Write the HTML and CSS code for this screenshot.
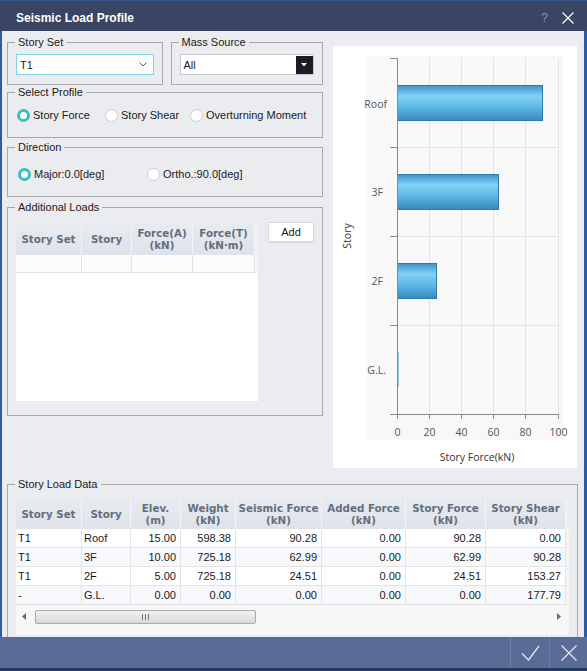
FILE: index.html
```html
<!DOCTYPE html>
<html>
<head>
<meta charset="utf-8">
<title>Seismic Load Profile</title>
<link rel="stylesheet" href="styles.css">
</head>
<body>
<div class="window">
  <div class="titlebar">
    <span class="title">Seismic Load Profile</span>
    <span class="help">?</span>
    <svg class="tclose" width="12" height="12" viewBox="0 0 12 12"><path d="M0.5 0.5 L11.5 11.5 M11.5 0.5 L0.5 11.5" stroke="#ffffff" stroke-width="1.2" fill="none"/></svg>
  </div>
  <div class="client">
    <div class="upper">
      <div class="leftcol">
        <div class="row1">
          <fieldset class="gb gb-storyset">
            <legend>Story Set</legend>
            <div class="gb-body pad-combo">
              <div class="combo combo-cyan">
                <span>T1</span>
                <svg width="8" height="5" viewBox="0 0 8 5"><polyline points="0.5,0.5 4,4 7.5,0.5" fill="none" stroke="#555" stroke-width="1"/></svg>
              </div>
            </div>
          </fieldset>
          <fieldset class="gb gb-mass">
            <legend>Mass Source</legend>
            <div class="gb-body pad-combo">
              <div class="combo combo-gray">
                <span>All</span>
                <span class="dropbtn"><svg width="6" height="4" viewBox="0 0 6 4"><polygon points="0,0 6,0 3,3.5" fill="#ffffff"/></svg></span>
              </div>
            </div>
          </fieldset>
        </div>
        <fieldset class="gb gb-profile">
          <legend>Select Profile</legend>
          <div class="gb-body radios profile">
            <label class="radio on w88"><i></i>Story Force</label>
            <label class="radio w85"><i></i>Story Shear</label>
            <label class="radio"><i></i>Overturning Moment</label>
          </div>
        </fieldset>
        <fieldset class="gb gb-dir">
          <legend>Direction</legend>
          <div class="gb-body radios dir">
            <label class="radio on w129"><i></i>Major:0.0[deg]</label>
            <label class="radio"><i></i>Ortho.:90.0[deg]</label>
          </div>
        </fieldset>
        <fieldset class="gb gb-add">
          <legend>Additional Loads</legend>
          <div class="gb-body addbody">
            <div class="grid addgrid">
              <div class="ghead addcols">
                <div class="hc">Story Set</div>
                <div class="hc">Story</div>
                <div class="hc">Force(A)<br>(kN)</div>
                <div class="hc">Force(T)<br>(kN·m)</div>
                <div class="hfill"></div>
              </div>
              <div class="grow addcols empty">
                <div class="c"></div><div class="c"></div><div class="c"></div><div class="c"></div><div class="cfill"></div>
              </div>
            </div>
            <button class="btn">Add</button>
          </div>
        </fieldset>
      </div>
      <div class="chart">
        <svg width="244" height="422" viewBox="0 0 244 422">
          <defs>
            <linearGradient id="bar" x1="0" y1="0" x2="0" y2="1">
              <stop offset="0" stop-color="#3e95c8"/>
              <stop offset="0.3" stop-color="#82d1f7"/>
              <stop offset="0.65" stop-color="#5bb5e3"/>
              <stop offset="1" stop-color="#3787bb"/>
            </linearGradient>
          </defs>
          <rect x="33" y="10" width="197" height="384" fill="#f8f8f8"/>
          <g stroke="#e3e3e3" stroke-width="1">
            <line x1="96.5" y1="12" x2="96.5" y2="368"/>
            <line x1="128.5" y1="12" x2="128.5" y2="368"/>
            <line x1="160.5" y1="12" x2="160.5" y2="368"/>
            <line x1="192.5" y1="12" x2="192.5" y2="368"/>
            <line x1="225.5" y1="12" x2="225.5" y2="368"/>
            <line x1="64" y1="101.5" x2="225" y2="101.5"/>
            <line x1="64" y1="190.5" x2="225" y2="190.5"/>
            <line x1="64" y1="279.5" x2="225" y2="279.5"/>
          </g>
          <rect x="64.5" y="39.5" width="145" height="35" fill="url(#bar)" stroke="#2f7cab"/>
          <rect x="64.5" y="128.5" width="101" height="35" fill="url(#bar)" stroke="#2f7cab"/>
          <rect x="64.5" y="217.5" width="39" height="35" fill="url(#bar)" stroke="#2f7cab"/>
          <rect x="64" y="306" width="1.5" height="35" fill="#3a8fc1"/>
          <g stroke="#8a8a8a" stroke-width="1">
            <line x1="64.5" y1="12" x2="64.5" y2="368"/>
            <line x1="57" y1="12.5" x2="64" y2="12.5"/>
            <line x1="57" y1="101.5" x2="64" y2="101.5"/>
            <line x1="57" y1="190.5" x2="64" y2="190.5"/>
            <line x1="57" y1="279.5" x2="64" y2="279.5"/>
            <line x1="57" y1="368.5" x2="225.5" y2="368.5"/>
            <line x1="64.5" y1="368" x2="64.5" y2="373"/>
            <line x1="96.5" y1="368" x2="96.5" y2="373"/>
            <line x1="128.5" y1="368" x2="128.5" y2="373"/>
            <line x1="160.5" y1="368" x2="160.5" y2="373"/>
            <line x1="192.5" y1="368" x2="192.5" y2="373"/>
            <line x1="225.5" y1="368" x2="225.5" y2="373"/>
          </g>
          <g class="ctext" text-anchor="end">
            <text x="54" y="62">Roof</text>
            <text x="50" y="150">3F</text>
            <text x="50" y="239">2F</text>
            <text x="53" y="328">G.L.</text>
          </g>
          <g class="ctext" text-anchor="middle">
            <text x="64.5" y="390">0</text>
            <text x="96.5" y="390">20</text>
            <text x="128.5" y="390">40</text>
            <text x="160.5" y="390">60</text>
            <text x="192.5" y="390">80</text>
            <text x="225.5" y="390">100</text>
            <text class="atitle" x="144" y="415">Story Force(kN)</text>
            <text class="atitle" transform="translate(18,190) rotate(-90)">Story</text>
          </g>
        </svg>
      </div>
    </div>
    <fieldset class="gb gb-data">
      <legend>Story Load Data</legend>
      <div class="gb-body databody">
        <div class="grid datagrid">
          <div class="ghead datacols">
            <div class="hc">Story Set</div>
            <div class="hc">Story</div>
            <div class="hc">Elev.<br>(m)</div>
            <div class="hc">Weight<br>(kN)</div>
            <div class="hc">Seismic Force<br>(kN)</div>
            <div class="hc">Added Force<br>(kN)</div>
            <div class="hc">Story Force<br>(kN)</div>
            <div class="hc">Story Shear<br>(kN)</div>
            <div class="hfill"></div>
          </div>
          <div class="grow datacols">
            <div class="c t">T1</div><div class="c t">Roof</div><div class="c n">15.00</div><div class="c n">598.38</div><div class="c n">90.28</div><div class="c n">0.00</div><div class="c n">90.28</div><div class="c n">0.00</div><div class="cfill"></div>
          </div>
          <div class="grow datacols alt">
            <div class="c t">T1</div><div class="c t">3F</div><div class="c n">10.00</div><div class="c n">725.18</div><div class="c n">62.99</div><div class="c n">0.00</div><div class="c n">62.99</div><div class="c n">90.28</div><div class="cfill"></div>
          </div>
          <div class="grow datacols">
            <div class="c t">T1</div><div class="c t">2F</div><div class="c n">5.00</div><div class="c n">725.18</div><div class="c n">24.51</div><div class="c n">0.00</div><div class="c n">24.51</div><div class="c n">153.27</div><div class="cfill"></div>
          </div>
          <div class="grow datacols alt">
            <div class="c t">-</div><div class="c t">G.L.</div><div class="c n">0.00</div><div class="c n">0.00</div><div class="c n">0.00</div><div class="c n">0.00</div><div class="c n">0.00</div><div class="c n">177.79</div><div class="cfill"></div>
          </div>
          <div class="hscroll">
            <svg class="arr" width="4" height="7" viewBox="0 0 4 7"><polygon points="4,0 4,7 0,3.5" fill="#6a6a6a"/></svg>
            <div class="thumb">
              <svg width="7" height="6" viewBox="0 0 7 6"><path d="M0.5 0 V6 M3.5 0 V6 M6.5 0 V6" stroke="#777" stroke-width="1"/></svg>
            </div>
            <div class="track"></div>
            <svg class="arr" width="4" height="7" viewBox="0 0 4 7"><polygon points="0,0 0,7 4,3.5" fill="#6a6a6a"/></svg>
          </div>
        </div>
      </div>
    </fieldset>
  </div>
  <div class="footer">
    <div class="fbtn">
      <svg width="19" height="16" viewBox="0 0 19 16"><polyline points="1,8.5 7.5,15 18,1" fill="none" stroke="#e2e6f0" stroke-width="1.3"/></svg>
    </div>
    <div class="fbtn">
      <svg width="16" height="16" viewBox="0 0 16 16"><path d="M0.5 0.5 L15.5 15.5 M15.5 0.5 L0.5 15.5" stroke="#e2e6f0" stroke-width="1.3" fill="none"/></svg>
    </div>
  </div>
  <div class="strip"></div>
</div>
</body>
</html>
```

FILE: styles.css
```css
* { box-sizing: border-box; }
html, body { margin: 0; padding: 0; }
body {
  width: 587px;
  height: 671px;
  overflow: hidden;
  font-family: "Liberation Sans", Arial, sans-serif;
  font-size: 11px;
  color: #1a1a1a;
  background: #23395f;
}
.window {
  width: 587px;
  height: 671px;
  display: flex;
  flex-direction: column;
}
.titlebar {
  height: 31px;
  flex: none;
  background: #394563;
  border-top: 1px solid #34558e;
  padding-top: 3px;
  padding-left: 16px;
  display: flex;
  align-items: center;
  color: #ffffff;
}
.title { flex: 1; font-weight: bold; font-size: 12px; }
.help { color: #8e98ae; font-size: 12px; margin-right: 14px; }
.tclose { margin-right: 13px; }

.client {
  flex: 1;
  min-height: 0;
  background: #ebecef;
  border-left: 2px solid #2a5ca8;
  border-right: 3px solid #2a5ca8;
  padding: 5px 6px 0 5px;
  display: flex;
  flex-direction: column;
  overflow: hidden;
}
.upper { display: flex; gap: 10px; flex: none; }
.leftcol { width: 316px; flex: none; display: flex; flex-direction: column; }
.row1 { display: flex; gap: 8px; }

.gb {
  margin: 0;
  padding: 0;
  min-width: 0;
  border: 1px solid #a8a8a8;
}
.gb legend {
  margin-left: 7px;
  padding: 0 3px;
  line-height: 13px;
  font-size: 11px;
  color: #1a1a1a;
}
.gb-storyset { width: 156px; }
.gb-mass { width: 153px; }
.pad-combo { padding: 5px 8px 9px 8px; }

.combo {
  height: 21px;
  background: #ffffff;
  display: flex;
  align-items: center;
  justify-content: space-between;
}
.combo-cyan {
  width: 138px;
  border: 1px solid #80d3e2;
  padding: 0 6px 0 3px;
}
.combo-gray {
  width: 134px;
  border: 1px solid #c8c8c8;
  padding: 0 0 0 3px;
}
.dropbtn {
  width: 17px;
  height: 18px;
  background: #1c1c27;
  display: flex;
  align-items: center;
  justify-content: center;
}

.gb-profile { margin-top: 1px; }
.gb-dir { margin-top: 3px; }
.gb-add { margin-top: 4px; }
.radios { display: flex; align-items: center; }
.profile { padding: 8px 0 14px 9px; }
.dir { padding: 12px 0 14px 10px; }
.radio { display: inline-flex; align-items: center; height: 16px; white-space: nowrap; }
.radio i {
  display: block;
  width: 13px;
  height: 13px;
  border-radius: 50%;
  background: #ffffff;
  border: 1px solid #cdcdcd;
  margin-right: 3px;
  flex: none;
}
.radio.on i { border: 3px solid #37bfc2; }
.w88 { width: 88px; }
.w85 { width: 85px; }
.w129 { width: 129px; }

.addbody { padding: 9px 8px 14px 8px; display: flex; gap: 10px; align-items: flex-start; }
.grid { background: #ffffff; display: flex; flex-direction: column; }
.addgrid { width: 242px; height: 178px; }
.addcols { display: grid; grid-template-columns: 66px 50px 61px 62px 3px; }
.datacols { display: grid; grid-template-columns: 66px 49px 50px 55px 86px 84px 80px 80px 3px; }
.ghead {
  background: linear-gradient(#e8ebf0, #dfe3e9);
}
.addgrid .ghead { height: 32px; }
.datagrid .ghead { height: 31px; }
.hc {
  border-right: 1px solid #f3f4f7;
  display: flex;
  align-items: center;
  justify-content: center;
  text-align: center;
  font-family: "DejaVu Sans", Verdana, sans-serif;
  font-weight: bold;
  font-size: 10.3px;
  line-height: 12px;
  color: #626e80;
  white-space: nowrap;
  overflow: hidden;
}
.hfill { background: #eef0f3; }
.grow .c {
  border-right: 1px solid #e3e3e3;
  border-bottom: 1px solid #e3e3e3;
  display: flex;
  align-items: center;
  white-space: nowrap;
}
.grow .cfill { background: #f4f4f4; }
.empty { height: 18px; background: #fcfcfd; }
.btn {
  width: 46px;
  height: 20px;
  margin-top: -1px;
  padding: 0;
  background: #ffffff;
  border: 1px solid #d9d9d9;
  border-radius: 1px;
  box-shadow: 0 1px 1px rgba(0,0,0,0.08);
  font-family: "Liberation Sans", Arial, sans-serif;
  font-size: 11px;
  color: #1a1a1a;
}

.chart {
  width: 244px;
  height: 422px;
  flex: none;
  margin-top: 10px;
  background: #ffffff;
}
.chart svg { display: block; }
.ctext text {
  font-family: "Open Sans", "Liberation Sans", sans-serif;
  font-size: 10.5px;
  fill: #555555;
}
.ctext text.atitle { fill: #333333; }

.gb-data {
  margin-top: 10px;
  flex: 1;
  border-bottom: none;
}
.databody { padding: 7px 0 0 8px; }
.datagrid { width: 553px; height: 137px; background: #f7f7f7; }
.datagrid .grow { height: 19px; background: #ffffff; }
.datagrid .grow.alt { background: #f6f8fb; }
.grow .t { padding-left: 2px; }
.grow .n { justify-content: flex-end; padding-right: 4px; }
.hscroll {
  height: 23px;
  display: flex;
  align-items: center;
  padding: 0 8px 0 6px;
}
.hscroll .arr { flex: none; }
.thumb {
  width: 221px;
  height: 14px;
  margin-left: 9px;
  border: 1px solid #a9a9a9;
  border-radius: 2px;
  background: linear-gradient(#f2f2f2, #d9d9d9);
  display: flex;
  align-items: center;
  justify-content: center;
}
.track { flex: 1; }

.footer {
  height: 31px;
  flex: none;
  background: #5a6b96;
  display: flex;
  justify-content: flex-end;
}
.fbtn {
  width: 38px;
  border-left: 1px solid #6e7ea6;
  display: flex;
  align-items: center;
  justify-content: center;
}
.fbtn:first-child { width: 39px; }
.strip { height: 3px; flex: none; background: #23395f; }
```
